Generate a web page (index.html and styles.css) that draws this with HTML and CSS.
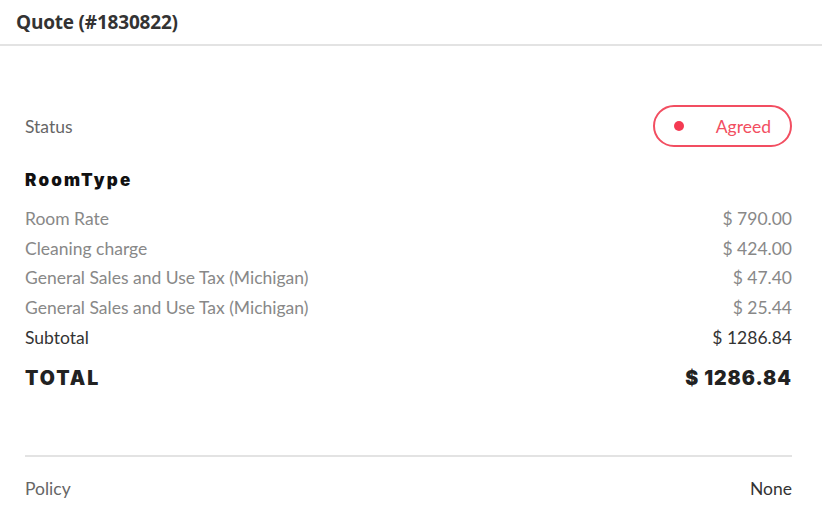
FILE: index.html
```html
<!DOCTYPE html>
<html>
<head>
<meta charset="utf-8">
<link rel="stylesheet" href="styles.css">
</head>
<body>
<div class="page">
  <header class="header"><h1 class="title">Quote (#1830822)</h1></header>
  <main class="content">
    <div class="row status-row">
      <span class="label">Status</span>
      <span class="pill"><span class="dot"></span><span class="pill-text">Agreed</span></span>
    </div>
    <h2 class="section">RoomType</h2>
    <div class="lines">
      <div class="row line"><span>Room Rate</span><span>$ 790.00</span></div>
      <div class="row line"><span>Cleaning charge</span><span>$ 424.00</span></div>
      <div class="row line"><span>General Sales and Use Tax (Michigan)</span><span>$ 47.40</span></div>
      <div class="row line"><span>General Sales and Use Tax (Michigan)</span><span>$ 25.44</span></div>
      <div class="row line subtotal"><span>Subtotal</span><span>$ 1286.84</span></div>
    </div>
    <div class="row total"><span class="total-label">TOTAL</span><span>$ 1286.84</span></div>
    <div class="divider"></div>
    <div class="row policy"><span>Policy</span><span class="policy-value">None</span></div>
  </main>
</div>
</body>
</html>
```
FILE: styles.css
```css
html, body { margin: 0; padding: 0; background: #fff; }
body { font-family: Lato, "Open Sans", sans-serif; color: #333; }
.page { width: 822px; }
.header { height: 44px; border-bottom: 2px solid #e3e3e3; padding-left: 16px; display: flex; align-items: center; }
.title { margin: 0; font-family: "Open Sans", sans-serif; font-weight: 700; font-size: 19px; color: #333; letter-spacing: -0.2px; }
.content { padding: 59px 30px 0 25px; }
.row { display: flex; justify-content: space-between; align-items: center; }
.status-row { height: 42px; font-size: 17.5px; color: #666; }
.pill { height: 38px; border: 2px solid #f24e61; border-radius: 22px; display: flex; align-items: center; padding: 0 19px; width: 97px; justify-content: space-between; }
.dot { width: 10px; height: 10px; border-radius: 50%; background: #f43a52; }
.pill-text { color: #f24e61; font-size: 17.5px; }
.section { margin: 21px 0 0; font-family: Inter, sans-serif; font-weight: 900; font-size: 17px; letter-spacing: 2.2px; color: #111; height: 25px; line-height: 25px; }
.lines { margin-top: 11px; }
.line { height: 29.6px; font-size: 17.5px; color: #888; }
.line.subtotal { color: #333; }
.total { margin-top: 11px; height: 30px; font-family: Inter, sans-serif; font-weight: 900; font-size: 19.5px; letter-spacing: 1px; color: #222; }
.total-label { letter-spacing: 2px; }
.divider { margin-top: 62px; height: 2px; background: #e3e3e3; }
.policy { height: 64px; font-size: 17.5px; color: #666; }
.policy-value { color: #333; }
```
